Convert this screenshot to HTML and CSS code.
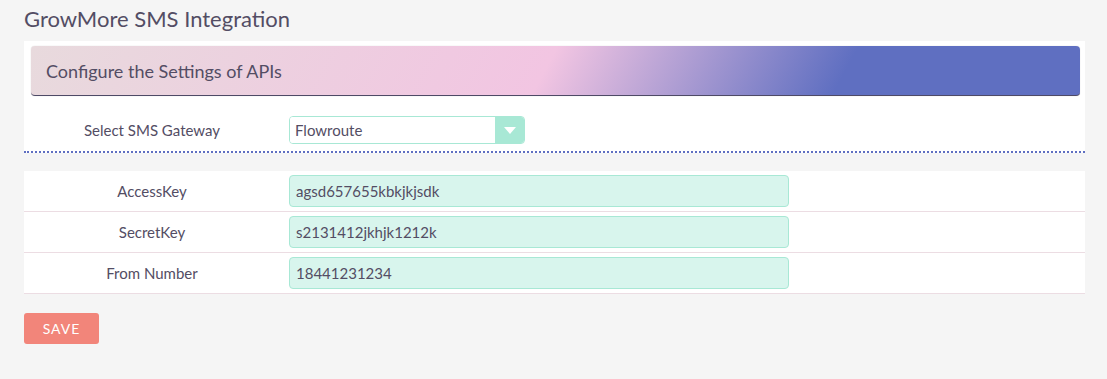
FILE: index.html
```html
<!DOCTYPE html>
<html lang="en">
<head>
    <meta charset="UTF-8">
    <meta name="viewport" content="width=device-width, initial-scale=1.0">
    <title>GrowMore SMS Integration</title>
    <link rel="stylesheet" href="styles.css">
</head>
<body>

<div class="page">
    <h1>GrowMore SMS Integration</h1>

    <div class="panel">
        <div class="panel-heading">
            <h2>Configure the Settings of APIs</h2>
        </div>

        <div class="form-row gateway-row">
            <label for="gateway">Select SMS Gateway</label>
            <div class="field">
                <div class="select-box">
                    <select id="gateway" name="gateway">
                        <option value="flowroute">Flowroute</option>
                        <option value="twilio">Twilio</option>
                        <option value="nexmo">Nexmo</option>
                    </select>
                    <span class="select-arrow"></span>
                </div>
            </div>
        </div>
    </div>

    <div class="settings-table">
        <div class="form-row">
            <label for="access-key">AccessKey</label>
            <div class="field">
                <input type="text" id="access-key" value="agsd657655kbkjkjsdk">
            </div>
        </div>
        <div class="form-row">
            <label for="secret-key">SecretKey</label>
            <div class="field">
                <input type="text" id="secret-key" value="s2131412jkhjk1212k">
            </div>
        </div>
        <div class="form-row">
            <label for="from-number">From Number</label>
            <div class="field">
                <input type="text" id="from-number" value="18441231234">
            </div>
        </div>
    </div>

    <button type="button" class="save-btn">SAVE</button>
</div>

</body>
</html>
```

FILE: styles.css
```css
* {
    margin: 0;
    padding: 0;
    box-sizing: border-box;
}

body {
    font-family: Lato, "Open Sans", sans-serif;
    background-color: #f5f5f5;
    color: #534d64;
}

.page {
    padding: 7px 22px 0 24px;
}

h1 {
    font-size: 22px;
    font-weight: 400;
    line-height: 24px;
    margin-bottom: 10px;
}

.panel {
    background-color: #fff;
    padding-top: 5px;
}

.panel-heading {
    margin: 0 5px 0 7px;
    height: 50px;
    display: flex;
    align-items: center;
    padding-left: 15px;
    border-radius: 4px;
    border-bottom: 1px solid #4e4a66;
    background: linear-gradient(118deg, #e8dadd 0%, #f2c5e2 49%, #5f6fc1 77%, #5f6fc1 100%);
    box-shadow: 0 0 1px rgba(0, 0, 0, 0.25);
}

.panel-heading h2 {
    font-size: 18px;
    font-weight: 400;
}

.form-row {
    display: grid;
    grid-template-columns: 256px 1fr;
    align-items: center;
    height: 41px;
    border-bottom: 1px solid #ecdde3;
}

.form-row label {
    font-size: 15px;
    text-align: center;
}

.field {
    padding-left: 9px;
}

.gateway-row {
    height: 57px;
    padding: 20px 0 7px;
    border-bottom: 2px dotted #5f6fc1;
}

.select-box {
    display: flex;
    width: 236px;
    height: 28px;
    border: 1px solid #a8e8d5;
    border-radius: 4px;
    overflow: hidden;
}

.select-box select {
    flex: 1;
    appearance: none;
    -webkit-appearance: none;
    border: none;
    background: #fff;
    font-family: inherit;
    font-size: 15px;
    color: #534d64;
    padding-left: 5px;
    outline: none;
}

.select-arrow {
    width: 29px;
    background-color: #a8e8d5;
    display: flex;
    align-items: center;
    justify-content: center;
}

.select-arrow::after {
    content: "";
    border-left: 6px solid transparent;
    border-right: 6px solid transparent;
    border-top: 7px solid #fff;
}

.settings-table {
    background-color: #fff;
    margin-top: 18px;
}

.settings-table input {
    width: 500px;
    height: 32px;
    padding: 0 6px;
    background-color: #d8f5ed;
    border: 1px solid #a8e8d5;
    border-radius: 4px;
    font-family: inherit;
    font-size: 15px;
    color: #534d64;
    outline: none;
}

.save-btn {
    margin-top: 19px;
    width: 75px;
    height: 31px;
    background-color: #f2857a;
    color: #fff;
    border: none;
    border-radius: 3px;
    font-family: inherit;
    font-size: 14px;
    letter-spacing: 1px;
    cursor: pointer;
}

.save-btn:hover {
    background-color: #e9776c;
}
```
